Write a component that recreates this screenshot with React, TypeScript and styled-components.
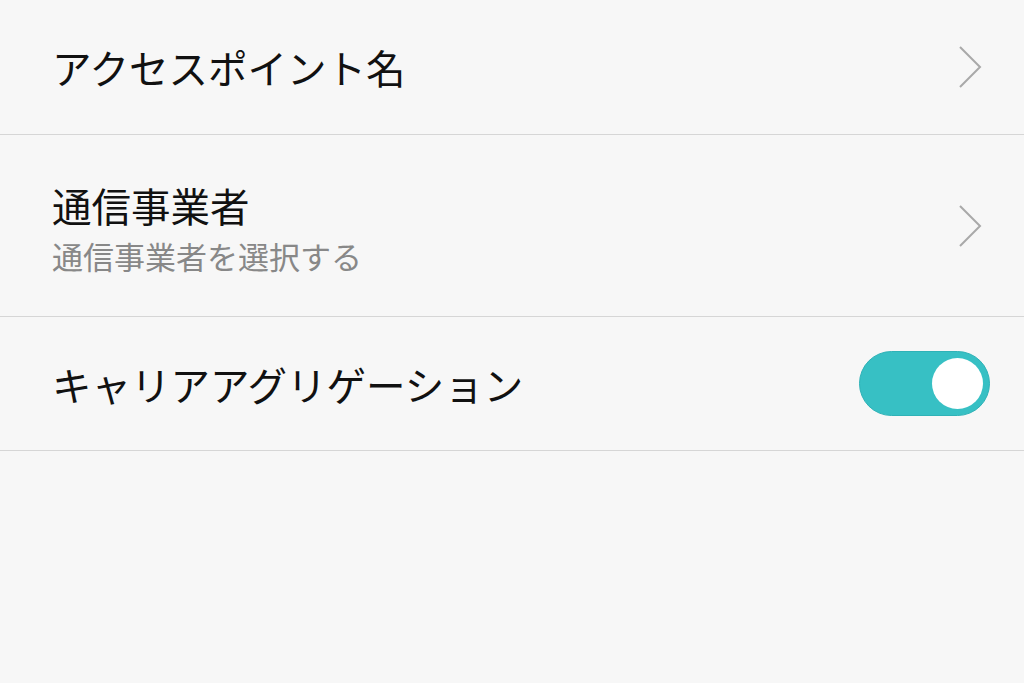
import React, { useState } from 'react';
import styled, { createGlobalStyle } from 'styled-components';

const GlobalStyle = createGlobalStyle`
  html, body {
    margin: 0;
    padding: 0;
    background: #f7f7f7;
    font-family: 'Noto Sans CJK JP', 'Noto Sans', sans-serif;
  }
`;

const List = styled.div`
  display: flex;
  flex-direction: column;
  width: 1024px;
  min-height: 683px;
  background: #f7f7f7;
`;

const Row = styled.div<{ h: number }>`
  display: flex;
  align-items: center;
  justify-content: space-between;
  height: ${({ h }) => h}px;
  padding: 0 34px 0 52px;
  border-bottom: 1.5px solid #d6d6d6;
  box-sizing: content-box;
`;

const Texts = styled.div`
  display: flex;
  flex-direction: column;
  gap: 8px;
  padding-top: 4px;
`;

const Title = styled.div`
  font-size: 39.5px;
  line-height: 48px;
  color: #111;
`;

const Subtitle = styled.div`
  font-size: 31px;
  line-height: 38px;
  color: #888;
`;

const ChevronBox = styled.div`
  width: 32px;
  height: 44px;
  margin-right: 4px;
  display: flex;
  align-items: center;
  justify-content: center;
`;

const Toggle = styled.button<{ on: boolean }>`
  position: relative;
  width: 131px;
  height: 65px;
  border-radius: 33px;
  border: 1.5px solid ${({ on }) => (on ? '#2fb2b7' : '#cfcfcf')};
  background: ${({ on }) => (on ? '#37c0c4' : '#e6e6e6')};
  padding: 0;
  cursor: pointer;
  box-sizing: border-box;
`;

const Knob = styled.span<{ on: boolean }>`
  position: absolute;
  top: 5.5px;
  left: ${({ on }) => (on ? '72px' : '5px')};
  width: 51px;
  height: 51px;
  border-radius: 50%;
  background: #fff;
`;

const Chevron = () => (
  <ChevronBox>
    <svg width="24" height="44" viewBox="0 0 24 44">
      <polyline points="2,2 22,22 2,42" fill="none" stroke="#a9a9a9" strokeWidth="2" />
    </svg>
  </ChevronBox>
);

export default function App() {
  const [on, setOn] = useState(true);
  return (
    <>
      <GlobalStyle />
      <List>
        <Row h={134}>
          <Title>アクセスポイント名</Title>
          <Chevron />
        </Row>
        <Row h={181}>
          <Texts>
            <Title>通信事業者</Title>
            <Subtitle>通信事業者を選択する</Subtitle>
          </Texts>
          <Chevron />
        </Row>
        <Row h={133}>
          <Title>キャリアアグリゲーション</Title>
          <Toggle on={on} onClick={() => setOn(!on)} aria-label="toggle">
            <Knob on={on} />
          </Toggle>
        </Row>
      </List>
    </>
  );
}
